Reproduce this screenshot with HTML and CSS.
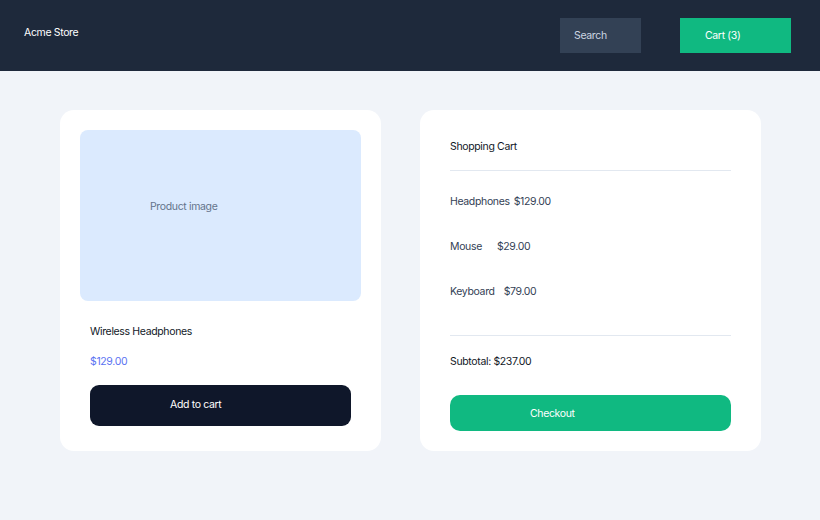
FILE: index.html
```html
<!DOCTYPE html>
<html lang="en">
<head>
  <meta charset="UTF-8">
  <title>Acme Store</title>
  <link rel="stylesheet" href="styles.css">
</head>
<body>
  <header class="topbar">
    <div class="brand">Acme Store</div>
    <div class="search">Search</div>
    <button class="cart-btn">Cart (3)</button>
  </header>

  <main class="page">
    <section class="card product">
      <div class="product-image">Product image</div>
      <div class="product-info">
        <div class="product-name">Wireless Headphones</div>
        <div class="product-price">$129.00</div>
      </div>
      <button class="add-btn">Add to cart</button>
    </section>

    <section class="card cart">
      <div class="cart-title">Shopping Cart</div>
      <ul class="cart-items">
        <li><span class="item-name">Headphones</span><span>$129.00</span></li>
        <li><span class="item-name mouse">Mouse</span><span>$29.00</span></li>
        <li><span class="item-name keyboard">Keyboard</span><span>$79.00</span></li>
      </ul>
      <div class="subtotal">Subtotal: $237.00</div>
      <button class="checkout-btn">Checkout</button>
    </section>
  </main>
</body>
</html>
```

FILE: styles.css
```css
body {
  margin: 0;
  background-color: #f1f4f9;
  font-family: Inter, "Liberation Sans", sans-serif;
  font-size: 10.5px;
  letter-spacing: -0.35px;
  line-height: 16px;
}

button {
  font-family: inherit;
  font-size: inherit;
  letter-spacing: inherit;
  border: none;
  cursor: pointer;
  text-align: left;
}

.topbar {
  height: 71px;
  box-sizing: border-box;
  background-color: #1e293b;
  display: flex;
  align-items: flex-start;
  padding: 18px 29px 0 24px;
}

.brand {
  color: #fff;
  flex: 1;
  line-height: 29px;
}

.search {
  width: 81px;
  height: 35px;
  box-sizing: border-box;
  background-color: #334155;
  color: #cbd5e1;
  padding-left: 14px;
  line-height: 35px;
  margin-right: 39px;
}

.cart-btn {
  width: 111px;
  height: 35px;
  background-color: #10b981;
  color: #fff;
  padding: 0 0 0 25px;
}

.page {
  display: flex;
  gap: 39px;
  padding: 39px 60px;
}

.card {
  background-color: #fff;
  border-radius: 14px;
  height: 341px;
  box-sizing: border-box;
}

.product {
  width: 321px;
  padding: 20px;
}

.product-image {
  height: 171px;
  box-sizing: border-box;
  background-color: #dbeafe;
  border-radius: 8px;
  color: #64748b;
  padding: 69px 0 0 70px;
}

.product-info {
  padding: 23px 10px 0;
}

.product-name {
  color: #111827;
}

.product-price {
  color: #5b73f2;
  margin-top: 14px;
}

.add-btn {
  display: block;
  margin: 15px 10px 0;
  width: 261px;
  height: 41px;
  border-radius: 9px;
  background-color: #0f172a;
  color: #fff;
  padding: 0 0 3px 80px;
}

.cart {
  width: 341px;
  padding: 29px 30px 20px;
}

.cart-title {
  color: #111827;
  padding-bottom: 15px;
  border-bottom: 1px solid #e2e8f0;
}

.cart-items {
  list-style: none;
  margin: 0;
  padding: 8px 0 21px;
  border-bottom: 1px solid #e2e8f0;
  color: #334155;
}

.cart-items li {
  display: flex;
  gap: 4px;
  padding: 14.5px 0;
}

.item-name.mouse {
  margin-right: 11px;
}

.item-name.keyboard {
  margin-right: 5px;
}

.subtotal {
  color: #111827;
  padding-top: 18px;
}

.checkout-btn {
  display: block;
  margin-top: 25px;
  width: 281px;
  height: 36px;
  border-radius: 10px;
  background-color: #10b981;
  color: #fff;
  padding: 1px 0 0 80px;
}
```
